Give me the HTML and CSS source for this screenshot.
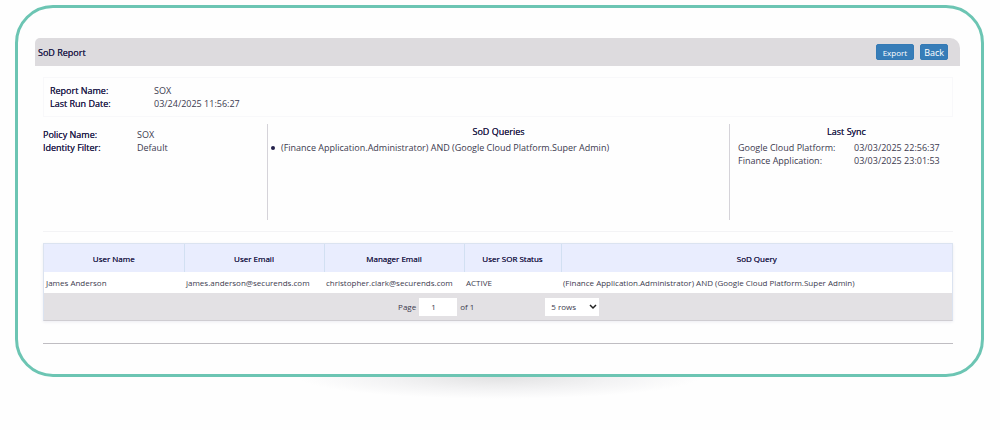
FILE: index.html
```html
<!DOCTYPE html>
<html lang="en">
  <head>
    <meta charset="UTF-8" />
    <meta name="viewport" content="width=device-width, initial-scale=1.0" />
    <title>SoD Report</title>
    <link rel="stylesheet" href="styles.css">
  </head>
  <body>
    <main class="frame">
      <header class="title-bar">
        <h1>SoD Report</h1>
        <button type="button" class="btn">Export</button>
        <button type="button" class="btn btn-back">Back</button>
      </header>

      <div class="content">
        <dl class="run-info">
          <dt>Report Name:</dt>
          <dd>SOX</dd>
          <dt>Last Run Date:</dt>
          <dd>03/24/2025 11:56:27</dd>
        </dl>

        <section class="summary">
          <dl class="policy">
            <dt>Policy Name:</dt>
            <dd>SOX</dd>
            <dt>Identity Filter:</dt>
            <dd>Default</dd>
          </dl>
          <div class="queries">
            <h2>SoD Queries</h2>
            <ul>
              <li>(Finance Application.Administrator) AND (Google Cloud Platform.Super Admin)</li>
            </ul>
          </div>
          <div class="sync">
            <h2>Last Sync</h2>
            <dl>
              <dt>Google Cloud Platform:</dt>
              <dd>03/03/2025 22:56:37</dd>
              <dt>Finance Application:</dt>
              <dd>03/03/2025 23:01:53</dd>
            </dl>
          </div>
        </section>

        <div class="grid">
          <table>
            <colgroup>
              <col class="col-name">
              <col class="col-email">
              <col class="col-email">
              <col class="col-status">
              <col>
            </colgroup>
            <thead>
              <tr>
                <th>User Name</th>
                <th>User Email</th>
                <th>Manager Email</th>
                <th>User SOR Status</th>
                <th>SoD Query</th>
              </tr>
            </thead>
            <tbody>
              <tr>
                <td>James Anderson</td>
                <td>james.anderson@securends.com</td>
                <td>christopher.clark@securends.com</td>
                <td>ACTIVE</td>
                <td>(Finance Application.Administrator) AND (Google Cloud Platform.Super Admin)</td>
              </tr>
            </tbody>
          </table>
          <div class="pager">
            <label for="page">Page</label>
            <input type="text" id="page" value="1">
            <span>of 1</span>
            <div class="rows">
              <select aria-label="Rows per page">
                <option>5 rows</option>
                <option>10 rows</option>
                <option>20 rows</option>
              </select>
              <svg viewBox="0 0 8 6" aria-hidden="true"><path d="M1 1l3 3 3-3" /></svg>
            </div>
          </div>
        </div>
        <hr>
      </div>
    </main>
    <div class="shadow"></div>
  </body>
</html>
```
FILE: styles.css
```css
* {
  box-sizing: border-box;
}
body {
  margin: 0;
  padding: 5px 16px 0 15px;
  background-color: #fefefe;
  color: #3c3a4e;
  font-family: "Open Sans", sans-serif;
  font-size: 9px;
  line-height: 13px;
}
h1,
h2,
dl,
dd,
ul {
  margin: 0;
  padding: 0;
}
h1,
h2,
dt,
th {
  color: #23204a;
  font-size: inherit;
  font-weight: 400;
  text-shadow: 0 0 0 #23204a;
}
.frame {
  padding: 30px 21px;
  border: 3px solid #6cc5b3;
  border-radius: 38px;
  background-color: #fefefe;
}

/* title bar */
.title-bar {
  display: flex;
  align-items: center;
  gap: 6px;
  height: 28px;
  margin-left: -4px;
  padding: 0 12px 0 3px;
  border-radius: 5px 10px 0 0;
  background-color: #dddbde;
}
.title-bar h1 {
  flex: 1;
}
.btn {
  height: 16px;
  padding: 0 6px;
  border: 1px solid #347ab5;
  border-radius: 2px;
  background-color: #377db8;
  color: #fff;
  font-family: inherit;
  font-size: 8px;
  line-height: 13px;
  cursor: pointer;
}
.btn-back {
  padding: 0 3px;
  font-size: 9px;
}

.content {
  margin: 11px 7px 0 4px;
}
dl {
  display: grid;
  align-content: start;
}
.run-info {
  grid-template-columns: 104px 1fr;
  padding: 6px;
  border: 1px solid #f8f8fa;
}

/* policy, queries and last sync */
.summary {
  display: flex;
  padding: 7px 0 11px;
  border-bottom: 1px solid #f3f3f5;
}
.policy {
  flex: 0 0 224px;
  grid-template-columns: 94px 1fr;
  padding-top: 4px;
}
.queries {
  flex: 1;
  height: 96px;
  padding: 1px 0;
  border-left: 1px solid #d5d3d9;
}
.queries ul {
  margin-top: 3px;
  padding-left: 13px;
}
/* keeps the bullet close to the text */
.queries li {
  display: flex;
  align-items: center;
}
.queries li::before {
  content: "";
  width: 4px;
  height: 4px;
  margin: 1px 6px 0 -10px;
  border-radius: 50%;
  background-color: #23204a;
}
.sync {
  flex: 0 0 224px;
  padding: 1px 0 0 8px;
  border-left: 1px solid #d5d3d9;
}
.sync dl {
  grid-template-columns: 116px 1fr;
  margin-top: 3px;
}
.sync dt {
  color: inherit;
  text-shadow: none;
}
.sync h2 {
  padding-left: 2px;
}
h2 {
  text-align: center;
}

/* results */
.grid {
  margin-top: 11px;
  border: 1px solid #dbe3f0;
  border-bottom-color: #cfcdd2;
  box-shadow: 0 1px 3px #ececf2;
  font-size: 8px;
}
table {
  width: 100%;
  border-collapse: collapse;
  table-layout: fixed;
}
.col-name,
.col-email {
  width: 140px;
}
.col-status {
  width: 97px;
}
th {
  height: 28px;
  padding: 0;
  border-right: 1px solid #d2e0f2;
  background-color: #e9edfe;
}
th:last-child {
  border-right: 0;
}
td {
  height: 21px;
  padding: 0 2px;
  background-color: #fff;
  white-space: nowrap;
}
.pager {
  display: flex;
  align-items: center;
  gap: 3px;
  height: 27px;
  padding-left: 39%;
  background-color: #e3e1e4;
}
.pager input,
.pager select {
  height: 18px;
  border: 0;
  background-color: #fff;
  color: inherit;
  font: inherit;
}
.pager input {
  width: 38px;
  padding: 0 12px;
}
.rows {
  position: relative;
  margin-left: 68px;
}
.rows select {
  display: block;
  width: 54px;
  padding: 0 6px;
  appearance: none;
}
.rows svg {
  position: absolute;
  top: 6px;
  right: 2px;
  width: 8px;
  height: 6px;
  fill: none;
  stroke: #222;
  stroke-width: 1.5;
  pointer-events: none;
}
hr {
  margin: 22px 0 0;
  border: 0;
  border-top: 1px solid #bfbdc2;
}

.shadow {
  width: 42%;
  height: 22px;
  margin: 0 auto;
  background: radial-gradient(ellipse at top, #e2e2e3, #f3f3f4 40%, #fefefe 70%);
}
```
